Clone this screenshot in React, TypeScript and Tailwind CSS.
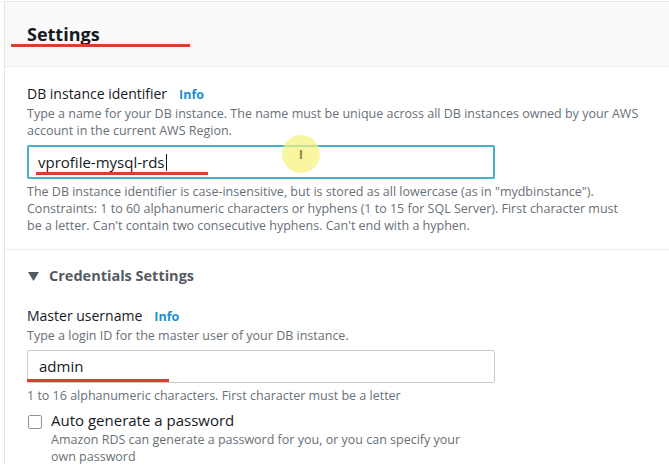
const font = { fontFamily: '"Open Sans", "Liberation Sans", sans-serif' };

function Info() {
  return <span className="ml-3 text-[12.5px] font-bold text-[#1a8fd0]">Info</span>;
}

export default function App() {
  return (
    <div className="h-[471px] w-[669px] overflow-hidden bg-white pl-[4px] pt-[1px]" style={font}>
      <div className="border-l border-t border-[#e4e7e7] bg-white">
        {/* Header */}
        <div className="relative flex h-[65px] items-center border-b border-[#eaeded] bg-[#fafafa] pl-[22px]">
          <h2 className="text-[18px] font-bold leading-none text-[#16191f]">Settings</h2>
          <div className="absolute left-[6px] top-[42px] h-[3px] w-[179px] bg-[#d9402b]" />
        </div>

        {/* DB instance identifier */}
        <div className="border-b border-[#eaeded] pb-[15px] pl-[22px] pt-[17px]">
          <div className="flex items-baseline text-[14px] leading-[20px] text-[#16191f]">
            DB instance identifier
            <Info />
          </div>
          <p className="w-[640px] text-[12.5px] leading-[17px] text-[#687078]">
            Type a name for your DB instance. The name must be unique across all DB instances owned by your AWS account in the current AWS Region.
          </p>
          <div className="relative mt-[6px] flex h-[34px] w-[468px] items-center rounded-[2px] border-2 border-[#46aec7] pl-[9px] text-[15px] text-[#16191f]">
            vprofile-mysql-rds
            <span className="ml-[1px] h-[17px] w-px bg-[#16191f]" />
            <div className="absolute left-[7px] top-[25px] h-[3px] w-[172px] bg-[#d9402b]" />
            <div className="absolute left-[253px] top-[-12px] flex h-[38px] w-[38px] items-center justify-center rounded-full bg-[#f6f27a]/70">
              <span className="text-[13px] font-bold leading-none text-[#8a8a40]">I</span>
            </div>
          </div>
          <p className="mt-[4px] w-[600px] text-[12.5px] leading-[17px] text-[#687078]">
            The DB instance identifier is case-insensitive, but is stored as all lowercase (as in "mydbinstance").
            <br />
            Constraints: 1 to 60 alphanumeric characters or hyphens (1 to 15 for SQL Server). First character must be a letter. Can't contain two consecutive hyphens. Can't end with a hyphen.
          </p>
        </div>

        {/* Credentials */}
        <div className="pl-[22px] pt-[16px]">
          <div className="flex items-center gap-[10px] text-[14.5px] font-bold leading-[20px] text-[#545b64]">
            <svg width="11" height="9" viewBox="0 0 11 9" className="ml-[1px]">
              <path d="M0 0 L11 0 L5.5 9 Z" fill="#545b64" />
            </svg>
            Credentials Settings
          </div>

          <div className="mt-[20px] flex items-baseline text-[14px] leading-[20px] text-[#16191f]">
            Master username
            <Info />
          </div>
          <p className="text-[12.5px] leading-[17px] text-[#687078]">
            Type a login ID for the master user of your DB instance.
          </p>
          <div className="relative mt-[6px] flex h-[33px] w-[468px] items-center rounded-[2px] border border-[#c6cbcb] pl-[11px] text-[15px] text-[#16191f]">
            admin
            <div className="absolute left-[-1px] top-[28px] h-[3px] w-[142px] bg-[#d9402b]" />
          </div>
          <p className="mt-[4px] text-[12.5px] leading-[17px] text-[#687078]">
            1 to 16 alphanumeric characters. First character must be a letter
          </p>

          <div className="mt-[6px] flex items-start gap-[9px]">
            <div className="ml-[1px] mt-[5px] h-[14px] w-[14px] rounded-[2px] border border-[#8d9696] bg-white" />
            <div>
              <div className="text-[15px] leading-[21px] text-[#16191f]">Auto generate a password</div>
              <p className="w-[430px] text-[12.5px] leading-[17px] text-[#687078]">
                Amazon RDS can generate a password for you, or you can specify your own password
              </p>
            </div>
          </div>
        </div>
      </div>
    </div>
  );
}
